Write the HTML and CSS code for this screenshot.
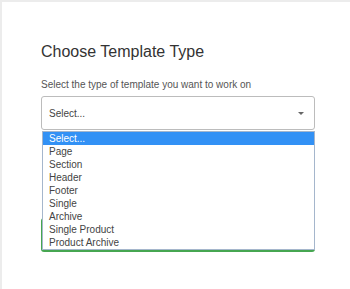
FILE: index.html
```html
<!DOCTYPE html>
<html lang="en">
<head>
  <meta charset="UTF-8">
  <meta name="viewport" content="width=device-width, initial-scale=1.0">
  <title>Choose Template Type</title>
  <link rel="stylesheet" href="styles.css">
</head>

<body>

  <div class="card">
    <h2>Choose Template Type</h2>
    <p class="hint">Select the type of template you want to work on</p>

    <div class="picker">
      <div class="picker-box">
        <span>Select...</span>
        <span class="caret"></span>
      </div>

      <!-- open dropdown list -->
      <ul class="picker-list">
        <li class="active">Select...</li>
        <li>Page</li>
        <li>Section</li>
        <li>Header</li>
        <li>Footer</li>
        <li>Single</li>
        <li>Archive</li>
        <li>Single Product</li>
        <li>Product Archive</li>
      </ul>
    </div>

    <button class="create-btn" type="button">Create Template</button>
  </div>

</body>
</html>
```

FILE: styles.css
```css
/* General Reset */
* {
  margin: 0;
  padding: 0;
  box-sizing: border-box;
}

body {
  font-family: 'Liberation Sans', Arial, sans-serif;
  background: #ececec;
  color: #444;
  height: 289px;
  overflow: hidden;
  padding: 2px 0 0 2px;
}

.card {
  background: #fff;
  height: 100%;
  padding: 41px 0 0 39px;
}

h2 {
  font-size: 16px;
  line-height: 18px;
  font-weight: 400;
  color: #333;
}

.hint {
  margin-top: 18px;
  font-size: 10px;
  line-height: 12px;
  color: #555;
}

/* Select */
.picker {
  position: relative;
  width: 274px;
  margin-top: 5px;
}

.picker-box {
  display: flex;
  align-items: center;
  justify-content: space-between;
  height: 34px;
  padding: 0 10px 0 7px;
  border: 1px solid #bcbcbc;
  border-radius: 3px;
  font-size: 10px;
  color: #444;
}

.caret {
  width: 0;
  height: 0;
  border-left: 3px solid transparent;
  border-right: 3px solid transparent;
  border-top: 3px solid #666;
}

.picker-list {
  position: absolute;
  top: 35px;
  left: 1px;
  width: 273px;
  list-style: none;
  background: #fff;
  border: 1px solid #a5b6cc;
  z-index: 10;
}

.picker-list li {
  height: 13px;
  line-height: 13px;
  padding-left: 6px;
  font-size: 10px;
  color: #444;
}

.picker-list li.active {
  background: #3291f5;
  color: #fff;
}

.create-btn {
  display: block;
  width: 274px;
  height: 34px;
  margin-top: 88px;
  border: none;
  border-radius: 3px;
  background: #46a651;
  color: #fff;
  font-family: inherit;
  font-size: 11px;
}
```
